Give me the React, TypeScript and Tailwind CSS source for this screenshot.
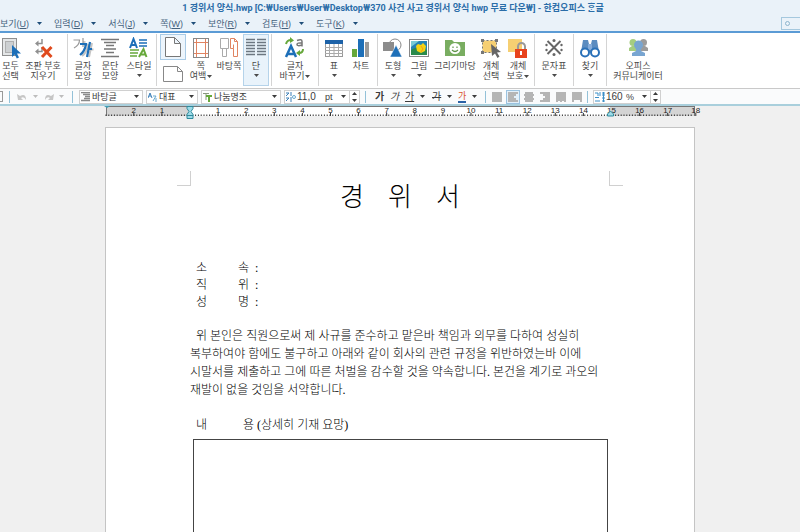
import type { ReactNode } from 'react'
import clsx from 'clsx'

const menus = [
  { name: '보기', hotkey: 'U' },
  { name: '입력', hotkey: 'D' },
  { name: '서식', hotkey: 'J' },
  { name: '쪽', hotkey: 'W' },
  { name: '보안', hotkey: 'R' },
  { name: '검토', hotkey: 'H' },
  { name: '도구', hotkey: 'K' },
]

const bodyLines = [
  '\u00a0\u00a0위 본인은 직원으로써 제 사규를 준수하고 맡은바 책임과 의무를 다하여 성실히',
  '복부하여야 함에도 불구하고 아래와 같이 회사의 관련 규정을 위반하였는바 이에',
  '시말서를 제출하고 그에 따른 처벌을 감수할 것을 약속합니다. 본건을 계기로 과오의',
  '재발이 없을 것임을 서약합니다.',
]

const fields = ['소속', '직위', '성명']

function Caret({ className }: { className?: string }) {
  return (
    <svg viewBox="0 0 5 3" className={clsx('h-[3px] w-[5px] shrink-0', className)} aria-hidden="true">
      <path d="M0 0h5L2.5 3z" fill="currentColor" />
    </svg>
  )
}

function Icon({ children, width = 22 }: { children: ReactNode; width?: number }) {
  return (
    <svg viewBox={`0 0 ${width} 22`} width={width} height={22} className="shrink-0" fill="none" aria-hidden="true">
      {children}
    </svg>
  )
}

type ToolProps = {
  icon: ReactNode
  lines: string[]
  width: string
  caret?: 'below' | 'inline'
  active?: boolean
}

function Tool({ icon, lines, width, caret, active }: ToolProps) {
  return (
    <button
      type="button"
      className={clsx(
        'flex h-[52px] shrink-0 flex-col items-center border pt-[2px] text-[9px] leading-[10px] whitespace-nowrap',
        width,
        active ? 'border-[#b5d3ea] bg-[#e9f3fb]' : 'border-transparent'
      )}
    >
      {icon}
      <span className="mt-[2px] flex flex-col items-center">
        {lines.map((line, i) => (
          <span key={line} className="flex items-center">
            {line}
            {caret === 'inline' && i === lines.length - 1 && <Caret className="ml-px" />}
          </span>
        ))}
      </span>
      {caret === 'below' && <Caret className="mt-[3px]" />}
    </button>
  )
}

function Divider() {
  return <span className="mx-[2px] h-[52px] w-px shrink-0 bg-[#d4d4d4]" />
}

function BarDivider({ className }: { className?: string }) {
  return <span className={clsx('h-[12px] w-px shrink-0 bg-[#93c1d8]', className)} />
}

function Combo({ label, value, width, icon }: { label: string; value: string; width: string; icon: ReactNode }) {
  return (
    <label className={clsx('flex h-[14px] shrink-0 items-center border border-[#d0d0d0] bg-white pr-[3px] pl-px', width)}>
      {icon}
      <select aria-label={label} className="ml-[2px] h-[12px] min-w-0 flex-1 appearance-none text-[9px] leading-[12px] outline-none">
        <option>{value}</option>
      </select>
      <Caret />
    </label>
  )
}

function NumberBox({ label, value, unit, width, icon }: { label: string; value: string; unit: string; width: string; icon: ReactNode }) {
  return (
    <div className={clsx('flex h-[14px] shrink-0 items-center border border-[#d0d0d0] bg-white pl-px', width)}>
      {icon}
      <input aria-label={label} defaultValue={value} className="ml-px h-[12px] w-0 min-w-0 flex-1 text-[10px] leading-[12px] outline-none" />
      <span className="w-[16px] text-[9px] leading-[12px]">{unit}</span>
      <Caret className="mr-[3px]" />
      <span className="flex h-full w-[10px] flex-col items-center justify-center gap-[4px] border-l border-[#d0d0d0]">
        <button type="button" aria-label={`${label} 늘리기`}>
          <Caret className="block h-[2px] w-[4px] rotate-180" />
        </button>
        <button type="button" aria-label={`${label} 줄이기`}>
          <Caret className="block h-[2px] w-[4px]" />
        </button>
      </span>
    </div>
  )
}

const icons = {
  selectAll: (
    <Icon width={20}>
      <rect x="1.500" y="1.500" width="14" height="17" fill="#e4e6e7" stroke="#8f8f8f" />
      <rect x="4.500" y="4.500" width="8" height="11" fill="#cdd0d2" stroke="#b0b0b0" />
      <path d="M11 8v12l2.800-2.500 2 4 2.200-1-2-4H20z" fill="#1d6fb8" />
    </Icon>
  ),
  clearMarks: (
    <Icon>
      <path d="M10 2v4.500H5M10 10v4.500H5" stroke="#8f8f8f" strokeWidth="1.500" />
      <path d="M6.500 3.500v6L3 6.500zM6.500 11.500v6L3 14.500z" fill="#8f8f8f" />
      <path d="M10 10l9.500 10M19.500 10L10 20" stroke="#e04a1d" strokeWidth="3" />
    </Icon>
  ),
  charShape: (
    <Icon>
      <path d="M1.500 3h6q0 5-5.500 8M11 1v9M11 5h2.500" stroke="#999" strokeWidth="1.200" />
      <path d="M10 8h6q-1 7-6 11M20 6l-3 14M18.500 12.500h3" stroke="#c4c4c4" strokeWidth="2" />
      <path d="M8 7h6q-1 7-6 11M18 5l-3 15M17 12h3" stroke="#1d6fb8" strokeWidth="2.200" />
    </Icon>
  ),
  paraShape: (
    <Icon>
      <path d="M2 2.500h18M5 5.500h12M7 8.500h8M5 12h12M7 15.500h8M2 19.500h18" stroke="#777" strokeWidth="1.400" />
    </Icon>
  ),
  style: (
    <Icon>
      <path d="M2 11L5.500 2 9 11M3.500 8h4" stroke="#1d6fb8" strokeWidth="2" />
      <path d="M11 3h8M11 6h8M11 9h8" stroke="#1d6fb8" strokeWidth="1.500" />
      <path d="M11 20l4.500-8 3 8M13 17.500h5" stroke="#67a83b" strokeWidth="2" />
      <path d="M2 13h9M2 16h8M2 19h7" stroke="#67a83b" strokeWidth="1.500" />
    </Icon>
  ),
  margin: (
    <Icon>
      <rect x="3.500" y="1.500" width="15" height="19" stroke="#888" />
      <path d="M6.500 2v18M15.500 2v18M4 5.500h14M4 16.500h14" stroke="#e08462" />
    </Icon>
  ),
  master: (
    <Icon>
      <path d="M2.500 1.500h8v10h-8zM4.500 11.500v8h4v-8" stroke="#aaa" />
      <path d="M12.500 11.500v-10h4l3 3v15h-4v-8h-3M16.500 1.500v3h3M15.500 11.500v-4" stroke="#e08462" />
    </Icon>
  ),
  columns: (
    <Icon>
      <path
        d="M1 2.500h9M1 5.500h9M1 8.500h9M1 11.500h9M1 14.500h9M1 17.500h9M12 2.500h9M12 5.500h9M12 8.500h9M12 11.500h9M12 14.500h9M12 17.500h9"
        stroke="#6c7781"
        strokeWidth="1.500"
      />
    </Icon>
  ),
  replaceChar: (
    <Icon>
      <path d="M2 20L7 9l5 11M4 17h6" stroke="#1d6fb8" strokeWidth="2.500" />
      <path d="M2 7q1-4 5-4" stroke="#67a83b" strokeWidth="2" />
      <path d="M6 0l4 3.500L6 6z" fill="#67a83b" />
      <path d="M19 12q0 4-4 4" stroke="#67a83b" strokeWidth="2" />
      <path d="M16 13l-4 3 4 3z" fill="#67a83b" />
      <path d="M13 3.500q5-2 5 1v5M18 6q-5-.5-5 1.500t5 .5" stroke="#777" strokeWidth="1.500" />
    </Icon>
  ),
  table: (
    <Icon>
      <rect x="2.500" y="3.500" width="17" height="16" fill="#fff" stroke="#999" />
      <rect x="2" y="3" width="18" height="4" fill="#1d62a8" />
      <path d="M6.500 7v13M11 7v13M15.500 7v13M2 10.500h18M2 13.500h18M2 16.500h18" stroke="#aaa" />
    </Icon>
  ),
  chart: (
    <Icon>
      <rect x="2" y="12" width="5" height="8" fill="#67a83b" />
      <rect x="8" y="2" width="6" height="18" fill="#1d6fb8" />
      <rect x="15" y="5" width="4" height="15" fill="#9a9a9a" />
    </Icon>
  ),
  shapes: (
    <Icon>
      <circle cx="13" cy="8" r="6" stroke="#888" />
      <rect x="1" y="5" width="11" height="9" fill="#8c8c8c" />
      <path d="M14 8l6 12H8z" fill="#1d6fb8" stroke="#fff" strokeWidth=".5" />
    </Icon>
  ),
  picture: (
    <Icon>
      <rect x="1.500" y="2.500" width="19" height="17" fill="#fff" stroke="#888" />
      <rect x="3" y="4" width="16" height="14" fill="#2483b4" />
      <path d="M3 13q6-5 16 0v5H3z" fill="#2a8a4c" />
      <path d="M3 4h8L3 10z" fill="#79cbd5" />
      <path d="M8 9l2-2 3 1 2-2 3 3-1 5-4 2-4-2z" fill="#f5d313" />
      <path d="M13 9l2 3-2 3" stroke="#f29c1b" />
    </Icon>
  ),
  gallery: (
    <Icon>
      <path d="M1 3h7l2 2h11v14H1z" fill="#79ad61" />
      <circle cx="11" cy="11.500" r="5.500" fill="#fff" />
      <path d="M9 9.500V11M13 9.500V11M8 13q3 3 6 0" stroke="#5f944a" strokeWidth="1.200" />
    </Icon>
  ),
  pick: (
    <Icon>
      <rect x="2.500" y="3.500" width="14" height="12" fill="#f6cf72" stroke="#777" strokeDasharray="2 2" />
      <path d="M1 2h3v3H1zM15 2h3v3h-3zM1 14h3v3H1z" fill="#777" />
      <path d="M11 7l10 8-4 .5 2.500 4-2 1.500-2.500-4.500L12 19z" fill="#666" />
    </Icon>
  ),
  protect: (
    <Icon>
      <rect x="1" y="2" width="14" height="13" fill="#f6cf72" />
      <path d="M11 13V9.500a3.500 3.500 0 017 0V13" stroke="#999" strokeWidth="2" />
      <rect x="8" y="12" width="12" height="9" fill="#e8431d" />
      <path d="M14 14v4" stroke="#fff" strokeWidth="2" />
    </Icon>
  ),
  symbols: (
    <Icon>
      <path d="M4.500 4l13 13M17.500 4l-13 13" stroke="#666" strokeWidth="2" />
      <g fill="#666">
        <circle cx="11" cy="3.500" r="1.500" />
        <circle cx="11" cy="17.500" r="1.500" />
        <circle cx="3.500" cy="8" r="1.200" />
        <circle cx="18.500" cy="8" r="1.200" />
        <circle cx="3.500" cy="13" r="1.200" />
        <circle cx="18.500" cy="13" r="1.200" />
      </g>
    </Icon>
  ),
  find: (
    <Icon>
      <path d="M4 3h5l1 4h2l1-4h5l2 12H2z" fill="#5b8cc0" />
      <path d="M9 7h4v6H9z" fill="#86addb" />
      <circle cx="6" cy="15.500" r="4" fill="#fff" stroke="#2a71b8" strokeWidth="2" />
      <circle cx="16" cy="15.500" r="4" fill="#fff" stroke="#2a71b8" strokeWidth="2" />
    </Icon>
  ),
  people: (
    <Icon>
      <circle cx="6" cy="5.500" r="3.500" fill="#a5cd80" />
      <path d="M2 14v-3l3-2h4v5z" fill="#a5cd80" />
      <circle cx="16.500" cy="5.500" r="3.500" fill="#9c9c9c" />
      <path d="M14 14V9h4l3 2v3z" fill="#9c9c9c" />
      <circle cx="11.500" cy="8" r="4.500" fill="#78a5d1" />
      <path d="M9 11h5v3l4 2v3H5v-3l4-2z" fill="#78a5d1" />
    </Icon>
  ),
}

function Ribbon() {
  return (
    <div className="flex h-[56px] items-start overflow-hidden border-b border-[#c9c9c9] bg-white pt-px text-[#4a4a4a]">
      <Tool icon={icons.selectAll} lines={['모두', '선택']} width="w-[21px]" />
      <Tool icon={icons.clearMarks} lines={['조판 부호', '지우기']} width="w-[44px]" />
      <Divider />
      <Tool icon={icons.charShape} lines={['글자', '모양']} width="w-[26px]" />
      <Tool icon={icons.paraShape} lines={['문단', '모양']} width="w-[28px]" />
      <Tool icon={icons.style} lines={['스타일']} caret="below" width="w-[30px]" />
      <Divider />
      <div className="flex w-[28px] shrink-0 flex-col items-center">
        <button
          type="button"
          aria-label="세로"
          className="flex h-[26px] w-[26px] items-center justify-center border border-[#a9cbe6] bg-[#edf5fc]"
        >
          <svg viewBox="0 0 16 20" className="h-[20px] w-[16px]" aria-hidden="true">
            <path d="M.5.5h9l6 6v13H.5zM9.500.5v6h6" fill="#fff" stroke="#777" />
          </svg>
        </button>
        <button type="button" aria-label="가로" className="flex h-[26px] w-[26px] items-center justify-center pt-[2px]">
          <svg viewBox="0 0 20 16" className="h-[16px] w-[20px]" aria-hidden="true">
            <path d="M.5.5h14l5 5v10H.5zM14.500.5v5h5" fill="#fff" stroke="#888" />
          </svg>
        </button>
      </div>
      <Tool icon={icons.margin} lines={['쪽', '여백']} caret="inline" width="w-[28px]" />
      <Tool icon={icons.master} lines={['바탕쪽']} width="w-[28px]" />
      <Tool icon={icons.columns} lines={['단']} caret="below" active width="w-[26px]" />
      <Divider />
      <Tool icon={icons.replaceChar} lines={['글자', '바꾸기']} caret="inline" width="w-[42px]" />
      <Divider />
      <Tool icon={icons.table} lines={['표']} caret="below" width="w-[26px]" />
      <Tool icon={icons.chart} lines={['차트']} width="w-[28px]" />
      <Divider />
      <Tool icon={icons.shapes} lines={['도형']} caret="below" width="w-[26px]" />
      <Tool icon={icons.picture} lines={['그림']} caret="below" width="w-[26px]" />
      <Tool icon={icons.gallery} lines={['그리기마당']} width="w-[46px]" />
      <Tool icon={icons.pick} lines={['개체', '선택']} width="w-[26px]" />
      <Tool icon={icons.protect} lines={['개체', '보호']} caret="inline" width="w-[28px]" />
      <Divider />
      <Tool icon={icons.symbols} lines={['문자표']} caret="below" width="w-[34px]" />
      <Divider />
      <Tool icon={icons.find} lines={['찾기']} caret="below" width="w-[28px]" />
      <Divider />
      <Tool icon={icons.people} lines={['오피스', '커뮤니케이터']} width="w-[58px]" />
    </div>
  )
}

function AlignIcon({ d }: { d: string }) {
  return (
    <svg viewBox="0 0 10 10" className="h-[10px] w-[10px]" aria-hidden="true">
      <path d={d} fill="#b5b5b5" />
    </svg>
  )
}

const aligns = [
  { label: '양쪽 정렬', d: 'M0 0h10v10H0z' },
  { label: '왼쪽 정렬', d: 'M0 0h10v2H8v2H6v2h2v2h2v2H0z' },
  { label: '가운데 정렬', d: 'M1 0h8v2h1v2H9v2h1v2H9v2H1V8H0V6h1V4H0V2h1z' },
  { label: '오른쪽 정렬', d: 'M0 0h10v10H0V8h3V6h2V4H3V2H0z' },
  { label: '배분 정렬', d: 'M0 0h10v10H8V9H6v1H4V9H2v1H0z' },
  { label: '나눔 정렬', d: 'M0 0h10v10H8V8H2v2H0z' },
]

function FormatBar() {
  return (
    <div className="flex h-[15px] items-center overflow-hidden bg-[#fafbfc] text-[#3c3c3c]">
      <span className="h-[11px] w-[3px] shrink-0 border border-l-0 border-[#999]" />
      <BarDivider className="mr-[7px] ml-[6px]" />
      <button type="button" aria-label="되돌리기" className="flex shrink-0 items-center gap-[6px] text-[#bdbdbd]">
        <svg viewBox="0 0 10 8" className="h-[8px] w-[10px]" aria-hidden="true">
          <path d="M0 1l1 6h5L4 5q3-2 5 2Q9 0 3 3z" fill="#c6c6c6" />
        </svg>
        <Caret />
      </button>
      <button type="button" aria-label="다시 실행" className="mr-[8px] ml-[6px] flex shrink-0 items-center gap-[5px] text-[#bdbdbd]">
        <svg viewBox="0 0 10 8" className="h-[8px] w-[10px] -scale-x-100" aria-hidden="true">
          <path d="M0 1l1 6h5L4 5q3-2 5 2Q9 0 3 3z" fill="#c6c6c6" />
        </svg>
        <Caret />
      </button>
      <BarDivider className="mr-[6px]" />
      <div className="flex shrink-0 gap-[3px]">
        <Combo
          label="스타일"
          value="바탕글"
          width="w-[64px]"
          icon={
            <svg viewBox="0 0 9 10" className="h-[10px] w-[9px] shrink-0" aria-hidden="true">
              <path d="M0 .5h9M2 2.500h7M4 4.500h5M3 6.500h6M0 8.500h9" stroke="#8a8a8a" strokeWidth="1.400" />
            </svg>
          }
        />
        <Combo
          label="언어"
          value="대표"
          width="w-[52px]"
          icon={
            <svg viewBox="0 0 9 10" className="h-[10px] w-[9px] shrink-0" fill="none" aria-hidden="true">
              <path d="M0 6l2-5 2 5M1 4h2" stroke="#3b7fb8" />
              <path d="M5 4h3L5 9M8 6v4" stroke="#68a9cf" />
            </svg>
          }
        />
        <Combo
          label="글꼴"
          value="나눔명조"
          width="w-[80px]"
          icon={
            <svg viewBox="0 0 9 10" className="h-[10px] w-[9px] shrink-0" fill="none" aria-hidden="true">
              <path d="M0 1.500h6M3 1v7" stroke="#8a9a80" />
              <path d="M3 4h6M6 4v6" stroke="#67a83b" strokeWidth="2" />
            </svg>
          }
        />
        <NumberBox
          label="글자 크기"
          value="11,0"
          unit="pt"
          width="w-[76px]"
          icon={
            <svg viewBox="0 0 10 10" className="h-[10px] w-[10px] shrink-0" fill="none" aria-hidden="true">
              <path d="M0 1h3L0 4M5 0v4M0 6h3L0 9M5 5v5" stroke="#3b7fb8" />
              <circle cx="8" cy="5" r="1.500" stroke="#68a9cf" />
            </svg>
          }
        />
      </div>
      <BarDivider className="mr-[6px] ml-[5px]" />
      <div className="flex shrink-0 items-center text-[10px] leading-[12px]">
        <button type="button" aria-label="진하게" className="w-[15px] font-bold">가</button>
        <button type="button" aria-label="기울임" className="w-[15px] italic">가</button>
        <button type="button" aria-label="밑줄" className="flex w-[27px] items-center gap-[6px] pl-[3px] underline">가<Caret /></button>
        <button type="button" aria-label="취소선" className="flex w-[27px] items-center gap-[6px] pl-[3px] line-through">가<Caret /></button>
        <button type="button" aria-label="글자 색" className="flex w-[26px] items-center gap-[6px] pl-[2px]">
          <span className="border-b-2 border-[#2a62a5] text-[9px] leading-[10px] text-[#d9532c]">가</span>
          <Caret />
        </button>
      </div>
      <BarDivider className="mr-[4px] ml-[3px]" />
      <div className="flex shrink-0 items-center gap-[2px]">
        {aligns.map((align, i) => (
          <button
            key={align.label}
            type="button"
            aria-label={align.label}
            className={clsx(
              'flex h-[14px] w-[14px] items-center justify-center border',
              i === 1 ? 'border-[#9cc3e0] bg-[#e3f0fa]' : 'border-transparent'
            )}
          >
            <AlignIcon d={align.d} />
          </button>
        ))}
      </div>
      <BarDivider className="mr-[5px] ml-[3px]" />
      <NumberBox
        label="확대 비율"
        value="160"
        unit="%"
        width="w-[68px]"
        icon={
          <svg viewBox="0 0 10 10" className="h-[10px] w-[10px] shrink-0" fill="none" aria-hidden="true">
            <path d="M0 1h3v3M5 0v4M0 5.500h4M0 9h5M7 1h3M7 3h3M7 6h3M7 9h3M8.500 0v10" stroke="#3b8fc8" />
          </svg>
        }
      />
    </div>
  )
}

function Ruler() {
  // 28px per centimetre, zero sits on the left margin
  const zero = 84
  const ticks = Array.from({ length: 210 }, (_, i) => i * 2.8).filter((x) => x <= 589)
  const numbers = Array.from({ length: 21 }, (_, i) => i - 2).filter((n) => n !== 0)
  return (
    <svg viewBox="0 0 592 16" className="mx-auto block h-[16px] w-[592px] overflow-visible" role="img" aria-label="눈금자">
      <rect x="2" y="0" width="589" height="10" fill="#fff" />
      <rect x="2" y="0" width="84" height="10" fill="#d4d4d4" />
      <rect x="506" y="0" width="85" height="10" fill="#d4d4d4" />
      <path d="M2 .5h589M2.500 0v10M590.500 0v10" stroke="#777" />
      {ticks.map((x, i) => (
        <path key={i} d={`M${x + 2} 8.500v1.500`} stroke="#333" />
      ))}
      {numbers.map((n) => (
        <g key={n}>
          <path d={`M${zero + 2 + n * 28.1} 7v3`} stroke="#333" />
          <text x={zero + 2 + n * 28.1} y="7" textAnchor="middle" fontSize="8" fill="#222">
            {Math.abs(n)}
          </text>
        </g>
      ))}
      <path d="M0 0h6L3 2z" fill="#3f9fb5" />
      <path d="M83 .5h6v2L87 5.500l2 3v4h-6v-4l2-3-2-3z" fill="#9edbe8" stroke="#2f8a9c" />
      <path d="M83 9.500h6" stroke="#2f8a9c" />
      <path d="M506.500 5l3 3v2h-6V8z" fill="#9edbe8" stroke="#2f8a9c" />
    </svg>
  )
}

function Page() {
  return (
    <article className="mx-auto mt-[5px] flex w-[590px] flex-1 flex-col border border-b-0 border-[#c4c4c4] bg-white pt-[43px] font-['Liberation_Serif','Noto_Sans_CJK_KR',serif] text-[12px] font-light text-black">
      <div className="flex justify-between px-[71px]">
        <span className="h-[15px] w-[14px] border-r border-b border-[#d0d0d0]" />
        <span className="h-[15px] w-[14px] border-b border-l border-[#d0d0d0]" />
      </div>
      <div className="flex flex-1 flex-col px-[84px]">
        <h1 className="-mt-[4px] flex justify-center gap-6 text-[26px] leading-[32px]">
          <span>경</span> <span>위</span> <span>서</span>
        </h1>
        <dl className="mt-[46px] ml-[6px] leading-[17px]">
          {fields.map((field) => (
            <div key={field} className="flex">
              <dt className="flex w-[53px] justify-between">
                <span>{field[0]}</span>
                <span>{field[1]}</span>
              </dt>
              <dd className="ml-[6px]">:</dd>
            </div>
          ))}
        </dl>
        <p className="mt-4 leading-[18px] whitespace-nowrap">
          {bodyLines.map((line) => (
            <span key={line} className="block">
              {line}
            </span>
          ))}
        </p>
        <div className="mt-[17px] ml-[6px] flex leading-[18px]">
          <span className="w-[47px]">내</span>
          <span>용 (상세히 기재 요망)</span>
        </div>
        <div className="mt-[5px] mr-[2px] ml-[3px] flex-1 border border-b-0 border-[#444]" />
      </div>
    </article>
  )
}

export default function App() {
  return (
    <div className="flex h-screen flex-col overflow-hidden bg-[#f0f0f0] font-['Liberation_Sans','Noto_Sans_CJK_KR',sans-serif]">
      <header className="border-b-2 border-[#5b9bd5] bg-[#eaf2f9]">
        <h1 className="pr-[14px] text-center font-['Roboto','Noto_Sans_CJK_KR',sans-serif] text-[9px] leading-[16px] font-bold whitespace-nowrap text-[#2a6da8]">
          1 경위서 양식.hwp [C:₩Users₩User₩Desktop₩370 사건 사고 경위서 양식 hwp 무료 다운₩] - 한컴오피스 ᄒᆞᆫ글
        </h1>
        <div className="flex h-[15px] items-center">
          <nav className="flex items-center gap-[12px] text-[9px] leading-[14px] text-[#44617c]">
            {menus.map((menu) => (
              <button key={menu.name} type="button" className="flex items-center gap-[8px] whitespace-nowrap">
                <span>
                  {menu.name}(<u>{menu.hotkey}</u>)
                </span>
                <Caret className="text-[#1f4e79]" />
              </button>
            ))}
          </nav>
          <label className="ml-auto flex h-[13px] w-[19px] items-center border border-r-0 border-[#a5c8de] pl-[3px]">
            <svg viewBox="0 0 5 5" className="h-[5px] w-[5px] shrink-0" fill="none" aria-hidden="true">
              <circle cx="2.500" cy="2.500" r="2" stroke="#8db4cc" />
            </svg>
            <input aria-label="찾을 내용" className="w-0 min-w-0 flex-1 outline-none" />
          </label>
        </div>
      </header>
      <Ribbon />
      <FormatBar />
      <main className="flex flex-1 flex-col border-t-2 border-[#a9cfdc]">
        <Ruler />
        <Page />
      </main>
    </div>
  )
}
